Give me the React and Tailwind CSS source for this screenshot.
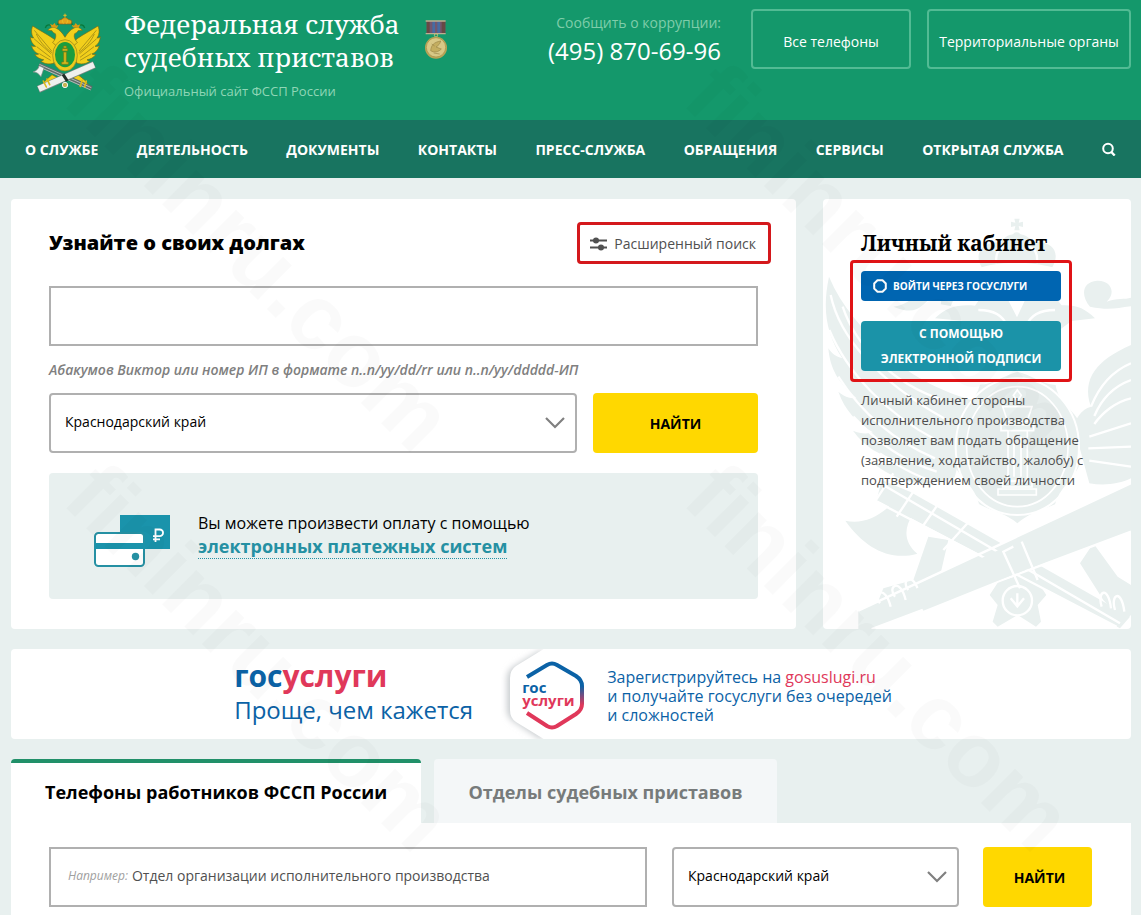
import React, { useState } from 'react';

const navItems = [
  'О службе',
  'Деятельность',
  'Документы',
  'Контакты',
  'Пресс-служба',
  'Обращения',
  'Сервисы',
  'Открытая служба',
];

const regions = ['Краснодарский край', 'Ростовская область', 'Московская область'];

const EmblemIcon = () => (
  <svg viewBox="0 0 270 270" className="h-[90px] w-[90px] shrink-0" aria-hidden="true">
    {/* wings */}
    <g fill="#f2cf1b" stroke="#7c6b12" strokeWidth="2" strokeLinejoin="round">
      <path d="M38 54c-6 14-3 28 3 36-4 0-7-1-10-4 1 14 7 23 16 29-5 1-9 0-13-2 4 13 12 21 22 25-4 2-8 2-12 1 7 10 17 15 27 16-2 3-5 4-9 5 12 8 27 10 40 5l14-35c2-20-8-34-20-41C80 78 60 68 38 54z" />
      <path d="M234 54c6 14 3 28-3 36 4 0 7-1 10-4-1 14-7 23-16 29 5 1 9 0 13-2-4 13-12 21-22 25 4 2 8 2 12 1-7 10-17 15-27 16 2 3 5 4 9 5-12 8-27 10-40 5l-14-35c-2-20 8-34 20-41 16-11 36-21 58-35z" />
      <path d="M108 60c-9-4-17-2-25 7l13 1c2 5 6 7 10 9 4 10-2 20-8 26l12 12h50l12-12c-6-6-12-16-8-26 4-2 8-4 10-9l13-1c-8-9-16-11-25-7-12 6-20 16-27 28-7-12-15-22-27-28z" />
      <path d="M96 200l-20 18-14 18 20-7 8 8 22-28zM174 200l22 18 13 18-20-7-8 8-22-28z" />
    </g>
    <g fill="none" stroke="#8b7915" strokeWidth="2">
      <path d="M43 67l52 62M42 92l52 46M50 116l42 32M58 137l34 20M229 67l-52 62M230 92l-52 46M222 116l-42 32M214 137l-34 20" />
      <path d="M49 78c10 22 25 40 47 56M223 78c-10 22-25 40-47 56" />
    </g>
    {/* crowns and ribbons */}
    <path d="M76 60c3-12 14-10 18-6M113 52c2-10 6-14 12-16M157 52c-2-10-6-14-12-16M194 60c-3-12-14-10-18-6" fill="none" stroke="#087a3b" strokeWidth="4" />
    <path d="M95 58l-5-10 8 3 6-6 4 8 7-2-4 9zM159 58l-4-8 7 3 5-8 6 7 8-3-5 11z" fill="#d99a14" />
    <path d="M117 48c-5-8-1-14 8-13 2-4 5-6 10-6s8 2 10 6c9-1 13 5 8 13z" fill="#e4a41b" stroke="#995c12" strokeWidth="2" />
    <path d="M135 17v12M130 22h10M126 35l4 12M144 35l-4 12" stroke="#e9bd24" strokeWidth="3" />
    {/* shield */}
    <ellipse cx="135" cy="142" rx="37" ry="47" fill="#edca1f" stroke="#94801b" strokeWidth="2" />
    <ellipse cx="135" cy="140" rx="30" ry="38" fill="#1b9d3e" />
    <path d="M131 132h8v30h6v7h-20v-7h6zM127 122h16v7h-16zM131 114h8v6h-8z" fill="#d4b81e" stroke="#7b7a10" strokeWidth="2" />
    {/* axe and scroll */}
    <path d="M57 171l158 70" stroke="#5e6d6a" strokeWidth="13" />
    <path d="M58 169l156 70M56 176l156 70" stroke="#b4bdb9" strokeWidth="3" />
    <path d="M72 180l-9 26c-8-10-14-14-24-14 10-4 16-9 19-19z" fill="#eef3f1" stroke="#7a8783" strokeWidth="2" />
    <path d="M55 244l168-74" stroke="#7b8683" strokeWidth="22" />
    <path d="M56 243l166-73" stroke="#eef0ee" strokeWidth="18" />
    <path d="M129 199l13 20" stroke="#222c28" strokeWidth="9" />
    <circle cx="135" cy="231" r="8" fill="#c5b554" stroke="#eef0ee" strokeWidth="3" />
    <path d="M70 219l9 18M81 213l8 17M187 216l-6 19M199 219l-5 17" stroke="#dcb91d" strokeWidth="5" strokeLinecap="round" />
  </svg>
);

const MedalIcon = () => (
  <svg viewBox="0 0 72 120" className="h-[40px] w-[24px] shrink-0" aria-hidden="true">
    <path d="M8 3h56v38H8z" fill="#72566f" />
    <path d="M8 3h9v38H8zM53 3h11v38H53z" fill="#684844" />
    <path d="M25 3h8v38h-8zM40 3h8v38h-8z" fill="#476ba2" />
    <path d="M5 3h60M5 41h60" stroke="#bfae91" strokeWidth="4" />
    <circle cx="36" cy="46" r="5" fill="none" stroke="#c9bd79" strokeWidth="3" />
    <circle cx="36" cy="83" r="33" fill="#b9a456" />
    <circle cx="36" cy="82" r="29" fill="#d8c886" stroke="#a8934a" strokeWidth="2" />
    <path d="M20 92c2-17 9-25 30-29-2 9-7 14-14 18l16 6c-9 9-21 12-32 5zM23 72l9 6M29 99l18 3" fill="#c4ae60" stroke="#9a8748" strokeWidth="2" />
  </svg>
);

const SearchIcon = () => (
  <svg viewBox="0 0 14 14" className="h-[14px] w-[14px]" fill="none" stroke="currentColor" strokeWidth="2" aria-hidden="true">
    <circle cx="6" cy="6.500" r="4.800" />
    <path d="M9.300 10l3.400 3.500" strokeWidth="2.400" />
  </svg>
);

const SlidersIcon = () => (
  <svg viewBox="0 0 18 14" className="h-[14px] w-[18px]" aria-hidden="true">
    <path d="M0 3.500h17M0 10.500h17" stroke="#505050" strokeWidth="2" />
    <circle cx="6" cy="3.500" r="3" fill="#505050" />
    <circle cx="11" cy="10.500" r="3" fill="#505050" />
  </svg>
);

const CardsIcon = () => (
  <svg viewBox="0 0 77 53" className="h-[53px] w-[77px] shrink-0" aria-hidden="true">
    <path d="M26 0h50v34H26z" fill="#1a93ab" />
    <path d="M61.500 27V14.500h4.200a3.300 3.300 0 0 1 0 6.700H59M59 24.300h7" fill="none" stroke="#fff" strokeWidth="1.800" />
    <rect x="1" y="18" width="49" height="33" rx="3.500" fill="#fff" stroke="#2590a3" strokeWidth="2" />
    <path d="M1 28h50v6H1z" fill="#1a93ab" />
    <circle cx="41.500" cy="41.500" r="3.700" fill="#2590a3" />
  </svg>
);

// pale eagle behind the account card
const EagleBackdrop = () => (
  <svg
    viewBox="69 27 924 1290"
    preserveAspectRatio="xMinYMin slice"
    className="absolute inset-0 h-full w-full"
    aria-hidden="true"
  >
    <g fill="#e9f0ef">
      <path d="M643 86h16l-3 12 13-3v16l-13-3 3 13h-16l3-13-13 3V95l13 3z" />
      <circle cx="650" cy="141" r="14" />
      <path d="M545 232c-26-45 5-80 57-74 12-20 28-26 48-26s38 7 49 26c55-8 85 27 58 74-30-9-72-14-107-14s-76 4-105 14z" />
      <path d="M405 385c35-33 65-42 120-38l35-51 53 12 38 74 36-77 56-10 42 51c45-2 70 9 100 39l-70 8-42 31c-50 23-82 17-122-12-40 28-82 33-128 8l-38-28z" />
      <path d="M280 350c70-8 80-74 150-70 32 8 38 42 22 68l-30-5c7-20-12-30-28-21-31 27-44 57-114 28zM870 350c-30-35-22-75 21-78 43-2 58 38 29 63 30-12 55-6 73-12v26c-45 6-70 12-123 1z" />
      <path d="M87 260c-20 95-10 170 40 245-20-5-30-13-42-30 5 60 30 105 85 150-25 0-40-7-55-20 20 56 55 94 104 122-20 6-40 3-60-5 37 50 80 76 140 87-23 14-50 16-80 11 75 58 160 80 245 42l60-230c-80-20-190-70-255-135C185 415 125 350 87 260z" />
      <path d="M993 465c-100 44-150 100-120 185-30 8-50 40-50 65l45 165c45 8 90 2 125-15z" />
      <path d="M652 545c45 10 67 35 115 40 5 45 47 70 72 110 16 40-10 88 0 130-20 45-62 70-74 118-38 18-73 23-113 57-38-33-78-36-115-58-10-50-56-78-75-118 10-44-10-92 3-130 25-38 62-62 75-110 40-2 70-27 112-39z" />
      <path d="M136 992c50 12 100-10 145-55l56 38c-22 35-30 78 15 116-85 24-160-20-216-99z" />
      <path d="M245 870l85 35 660 375-30 35-730-385z" />
      <path d="M175 1262L993 880v145L215 1317h-40z" />
      <path d="M385 1040l60 10-30 130c-20 50-70 85-120 105l-65-40 20-50 90-25zM880 1060l-40 60 70 110 60 65 23-20v-90l-40-25z" />
      <path d="M595 1175l58-18 60 18 26 40-26 30 10 50-15 15-55-35-60 35-15-15 15-50-24-30z" />
    </g>
    <g fill="none" stroke="#fff" strokeWidth="7">
      <path d="M92 315c25 120 130 250 340 370M88 420c55 130 170 250 320 330M115 560c70 110 160 190 290 245M160 680c80 85 155 135 250 165M240 790c70 50 125 78 190 92M128 350c40 120 150 230 300 280" />
      <path d="M993 520c-60 25-98 75-120 130M993 570c-55 20-90 60-110 108M993 625c-45 10-85 42-110 77M993 700l-125 40M993 770l-128 5M993 830l-125-18" />
      <path d="M540 245c60-22 160-22 220 0M590 220c-5-25 4-45 24-50M710 220c5-25-4-45-24-50M535 360c45 0 75 18 86 48M765 360c-45 0-75 18-86 48" />
      <path d="M250 885l710 415M220 930l730 380M280 850L215 950M350 890l-60 90M430 920l-80 115M520 980L430 1080M175 1262L993 880M215 1317L993 1025M240 1240c-25-30 15-60 32 10M285 1220c-25-30 15-60 32 10M325 1200c-25-30 15-60 32 10M905 1250c-15-48 20-65 28 5M945 1260c-15-48 20-65 28 5" />
      <circle cx="652" cy="1232" r="44" />
    </g>
    {/* scroll lies over the axe handle */}
    <path d="M340 1200L993 895v118L370 1262z" fill="#e9f0ef" />
    <ellipse cx="652" cy="770" rx="185" ry="205" fill="none" stroke="#fff" strokeWidth="6" />
    <ellipse cx="652" cy="770" rx="152" ry="180" fill="#e5eceb" stroke="#fff" strokeWidth="5" />
    <path d="M652 600l12 16-12 18-12-18zM608 650h88l-15 45h-58zM603 704h98v18h-98zM624 722h58v150h-58zM642 740v120M663 740v120M608 874h88v17h-88zM594 897h115v18H594z" fill="#e9f0ef" stroke="#fff" strokeWidth="5" />
    <path d="M640 1070l-30 15 50 110M665 1055l48 115M632 1225l20 24 20-24M652 1210v40" fill="none" stroke="#fff" strokeWidth="7" />
  </svg>
);

const GosuslugiBadge = () => (
  <div className="relative flex h-[90px] w-[90px] shrink-0 items-center overflow-hidden">
    <svg viewBox="0 0 90 90" className="absolute inset-0 h-full w-full" aria-hidden="true">
      <defs>
        <linearGradient id="hexLine" x1="0" y1="0" x2="0" y2="1">
          <stop offset="0.350" stopColor="#0b62a6" />
          <stop offset="0.650" stopColor="#e0385a" />
        </linearGradient>
        <filter id="hexShadow" x="-20%" y="-20%" width="140%" height="140%">
          <feGaussianBlur stdDeviation="3" />
        </filter>
      </defs>
      <path d="M42 0L12 18Q6 22 6 30v30q0 8 6 12l30 20" fill="#c8cccf" filter="url(#hexShadow)" />
      <path d="M46-2L15 17Q9 21 9 29v32q0 8 6 12l31 19h44V-2z" fill="#fff" />
      <path d="M26 28l20-12q5-3 10 0l19 11q6 4 6 10v18q0 6-6 10L56 77q-5 3-10 0L26 64" fill="none" stroke="url(#hexLine)" strokeWidth="4" />
    </svg>
    <span className="relative pl-[21px] text-[15px] leading-[13px] font-bold text-[#0b62a6]">
      гос
      <span className="block text-[#e0385a]">услуги</span>
    </span>
  </div>
);

const RegionSelect = ({ id, label }) => {
  const [region, setRegion] = useState(regions[0]);

  return (
    <div className="relative h-full w-full">
      <label htmlFor={id} className="sr-only">{label}</label>
      <select
        id={id}
        value={region}
        onChange={(e) => setRegion(e.target.value)}
        className="h-full w-full appearance-none rounded border-2 border-[#b0b0b0] bg-white pr-10 pb-1 pl-[14px] text-[14px] text-black"
      >
        {regions.map((name) => (
          <option key={name}>{name}</option>
        ))}
      </select>
      <svg viewBox="0 0 20 12" className="pointer-events-none absolute top-6 right-3 h-3 w-5" fill="none" stroke="#808080" strokeWidth="2.200" aria-hidden="true">
        <path d="M1 1l9 9 9-9" />
      </svg>
    </div>
  );
};

const Header = () => (
  <header>
    <div className="flex h-[120px] items-start bg-[#14986b] pr-[10px] pl-5 text-white">
      <div className="pt-2">
        <EmblemIcon />
      </div>
      <div className="pt-2 pl-[14px]">
        <h1 className="font-['Roboto_Slab','Noto_Serif','DejaVu_Serif',serif] text-[26px] leading-[33px] whitespace-nowrap">
          Федеральная служба
          <br />
          судебных приставов
        </h1>
        <p className="pt-[7px] text-[13px] leading-5 text-[#8fd6b6]">Официальный сайт ФССП России</p>
      </div>
      <div className="pt-5 pl-6">
        <MedalIcon />
      </div>
      <div className="ml-auto pt-3 pr-[30px] text-right whitespace-nowrap">
        <p className="text-[14px] leading-[22px] text-[#7fcdaa]">Сообщить о коррупции:</p>
        <p className="text-[24px] leading-[34px]">(495) 870-69-96</p>
      </div>
      <div className="flex gap-4 pt-[9px] text-[14px] whitespace-nowrap">
        <button type="button" className="h-[60px] w-[160px] rounded border-2 border-[#52bb94] pt-1">
          Все телефоны
        </button>
        <button type="button" className="h-[60px] w-[204px] rounded border-2 border-[#52bb94] pt-1">
          Территориальные органы
        </button>
      </div>
    </div>
    <nav className="flex h-[58px] items-center justify-between bg-[#187460] px-[25px] text-[14px] font-bold whitespace-nowrap text-white uppercase">
      {navItems.map((item) => (
        <a key={item} href="#">{item}</a>
      ))}
      <button type="button" aria-label="Поиск">
        <SearchIcon />
      </button>
    </nav>
  </header>
);

const DebtSearch = () => (
  <section className="flex-1 rounded bg-white px-[38px] pt-[23px] pb-[30px]">
    <div className="flex h-[42px] items-center justify-between">
      <h2 className="text-[20px] font-extrabold text-black">Узнайте о своих долгах</h2>
      <button
        type="button"
        className="-mr-[13px] flex h-[42px] items-center gap-[6px] rounded border-3 border-[#d4181c] pt-px pr-3 pl-[10px] text-[14px] text-[#505050]"
      >
        <SlidersIcon />
        Расширенный поиск
      </button>
    </div>
    <form onSubmit={(e) => e.preventDefault()}>
      <input
        type="text"
        aria-label="Поиск должника"
        aria-describedby="debt-hint"
        className="mt-[22px] block h-[60px] w-full border-2 border-[#b0b0b0] bg-white px-4 text-[14px]"
      />
      <p id="debt-hint" className="mt-[14px] text-[14px] leading-5 font-semibold text-[#808080] italic">
        Абакумов Виктор или номер ИП в формате n..n/yy/dd/rr или n..n/yy/ddddd-ИП
      </p>
      <div className="mt-[13px] flex h-[60px] gap-4">
        <RegionSelect id="debt-region" label="Регион" />
        <button type="submit" className="w-[165px] shrink-0 rounded bg-[#ffd800] pt-px text-[14px] font-bold text-black uppercase">
          Найти
        </button>
      </div>
    </form>
    <div className="mt-5 flex h-[126px] items-start rounded bg-[#e8f0ef] pt-[42px] pl-[45px]">
      <CardsIcon />
      <p className="-mt-1 pl-[27px] text-[16px] leading-6 text-black">
        Вы можете произвести оплату с помощью
        <a href="#" className="block w-fit border-b border-dotted border-[#2590a3] text-[18px] leading-[23px] font-bold text-[#2590a3]">
          электронных платежных систем
        </a>
      </p>
    </div>
  </section>
);

const AccountCard = () => (
  <section className="relative w-[308px] shrink-0 overflow-hidden rounded bg-white pt-7 pl-[38px]">
    <EagleBackdrop />
    <div className="relative">
      <h2 className="font-['Roboto_Slab','Noto_Serif','DejaVu_Serif',serif] text-[21px] leading-[33px] font-bold text-black">
        Личный кабинет
      </h2>
      <div className="-ml-[11px] flex h-[122px] w-[222px] flex-col gap-5 rounded border-3 border-[#e01316] p-2 font-bold text-white">
        <button type="button" className="flex h-[30px] items-center gap-[6px] rounded bg-[#0065b1] pl-3 text-[10px] uppercase">
          <svg viewBox="0 0 14 14" className="h-[14px] w-[14px]" aria-hidden="true">
            <path d="M4.500 1.200h5L12.800 4.500v5L9.500 12.800h-5L1.200 9.500v-5z" fill="none" stroke="#fff" strokeWidth="2" strokeLinejoin="round" />
          </svg>
          Войти через госуслуги
        </button>
        <button type="button" className="h-[50px] rounded bg-[#1b93a8] text-[12px] leading-[25px] uppercase">
          С помощью
          <br />
          электронной подписи
        </button>
      </div>
      <p className="w-[230px] pt-2 text-[13px] leading-5 text-[#4d4d4d]">
        Личный кабинет стороны исполнительного производства позволяет вам подать обращение (заявление, ходатайство, жалобу) с подтверждением своей личности
      </p>
    </div>
  </section>
);

const GosuslugiBanner = () => (
  <section className="mt-5 flex h-[90px] items-center justify-center overflow-hidden rounded bg-white pr-4 text-[#0b62a6]">
    <div className="w-[267px] pb-1 whitespace-nowrap">
      <p className="text-[30px] leading-9 font-bold">
        гос<span className="text-[#e0385a]">услуги</span>
      </p>
      <p className="text-[24px] leading-8">Проще, чем кажется</p>
    </div>
    <GosuslugiBadge />
    <p className="pt-1 pl-4 text-[16px] leading-[19px] whitespace-nowrap">
      Зарегистрируйтесь на <a href="#" className="text-[#e0385a]">gosuslugi.ru</a>
      <br />
      и получайте госуслуги без очередей
      <br />
      и сложностей
    </p>
  </section>
);

const StaffSearch = () => {
  const [query, setQuery] = useState('Отдел организации исполнительного производства');

  return (
    <section className="mt-5">
      <div role="tablist" className="flex h-16 gap-[13px] text-[18px] font-bold whitespace-nowrap">
        <button type="button" role="tab" aria-selected="true" className="w-[410px] rounded-t border-t-4 border-[#219069] bg-white pb-[2px] pl-[34px] text-left text-black">
          Телефоны работников ФССП России
        </button>
        <button type="button" role="tab" aria-selected="false" className="w-[343px] rounded-t bg-[#f4f7f8] pt-[2px] text-[#777b7b]">
          Отделы судебных приставов
        </button>
      </div>
      <form onSubmit={(e) => e.preventDefault()} className="flex bg-white pt-6 pr-[39px] pb-2 pl-[38px]">
        <div className="flex h-[60px] flex-1 items-center gap-1 border-2 border-[#b0b0b0] pb-[2px] pl-[17px]">
          <label htmlFor="staff-query" className="text-[12px] text-[#a0a0a0] italic">Например:</label>
          <input
            id="staff-query"
            type="text"
            value={query}
            onChange={(e) => setQuery(e.target.value)}
            className="min-w-0 flex-1 pb-[2px] text-[14px] text-[#505050] outline-none"
          />
        </div>
        <div className="ml-[25px] h-[60px] w-[287px]">
          <RegionSelect id="staff-region" label="Регион отдела" />
        </div>
        <button type="submit" className="ml-6 h-[60px] w-[109px] rounded bg-[#ffd800] pt-px pl-1 text-[14px] font-bold text-black uppercase">
          Найти
        </button>
      </form>
    </section>
  );
};

const Watermarks = () => (
  <div
    aria-hidden="true"
    className="pointer-events-none absolute inset-0 overflow-hidden font-['Liberation_Sans',sans-serif] text-[92px] leading-none font-bold text-black/2 select-none"
  >
    <span className="absolute top-[20px] left-[50px] origin-bottom-left rotate-45">fininru.com</span>
    <span className="absolute top-[20px] left-[670px] origin-bottom-left rotate-45">fininru.com</span>
    <span className="absolute top-[420px] left-[50px] origin-bottom-left rotate-45">fininru.com</span>
    <span className="absolute top-[420px] left-[670px] origin-bottom-left rotate-45">fininru.com</span>
  </div>
);

const App = () => (
  <div className="relative min-h-screen overflow-hidden bg-[#e8f0ef] font-['Open_Sans','Noto_Sans',sans-serif]">
    <Header />
    <main className="pt-[21px] pr-[10px] pl-[11px]">
      <div className="flex gap-[27px]">
        <DebtSearch />
        <AccountCard />
      </div>
      <GosuslugiBanner />
      <StaffSearch />
    </main>
    <Watermarks />
  </div>
);

export default App;
